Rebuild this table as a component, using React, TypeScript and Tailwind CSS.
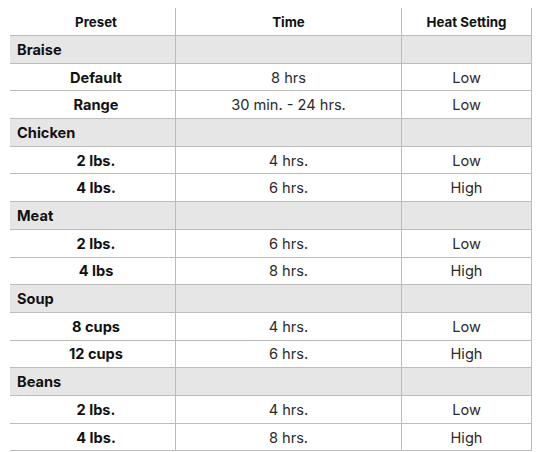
import React from "react";

type Row = { kind: "section"; label: string } | { kind: "item"; label: string; time: string; heat: string };

const rows: Row[] = [
  { kind: "section", label: "Braise" },
  { kind: "item", label: "Default", time: "8 hrs", heat: "Low" },
  { kind: "item", label: "Range", time: "30 min. - 24 hrs.", heat: "Low" },
  { kind: "section", label: "Chicken" },
  { kind: "item", label: "2 lbs.", time: "4 hrs.", heat: "Low" },
  { kind: "item", label: "4 lbs.", time: "6 hrs.", heat: "High" },
  { kind: "section", label: "Meat" },
  { kind: "item", label: "2 lbs.", time: "6 hrs.", heat: "Low" },
  { kind: "item", label: "4 lbs", time: "8 hrs.", heat: "High" },
  { kind: "section", label: "Soup" },
  { kind: "item", label: "8 cups", time: "4 hrs.", heat: "Low" },
  { kind: "item", label: "12 cups", time: "6 hrs.", heat: "High" },
  { kind: "section", label: "Beans" },
  { kind: "item", label: "2 lbs.", time: "4 hrs.", heat: "Low" },
  { kind: "item", label: "4 lbs.", time: "8 hrs.", heat: "High" },
];

export default function App() {
  return (
    <div className="w-[536px] h-[452px] overflow-hidden bg-white pt-[8px] pl-[10px]" style={{ fontFamily: '"Inter", "Noto Sans", sans-serif' }}>
      <div className="grid grid-cols-[166px_226px_130px] text-[#111]">
        <div className="h-[28px] border-r border-b border-[#bcbcbc] pl-[7px] pt-[2px] flex items-center justify-center text-[13.3px] font-bold">Preset</div>
        <div className="h-[28px] border-r border-b border-[#bcbcbc] pt-[2px] flex items-center justify-center text-[13.3px] font-bold">Time</div>
        <div className="h-[28px] border-r border-b border-[#bcbcbc] pt-[2px] flex items-center justify-center text-[13.3px] font-bold">Heat Setting</div>
        {rows.map((r, i) =>
          r.kind === "section" ? (
            <React.Fragment key={i}>
              <div className="h-[27.7px] bg-[#e6e6e6] border-r border-b border-[#bcbcbc] pl-[7px] pt-[3px] flex items-center text-[14.6px] font-bold">{r.label}</div>
              <div className="h-[27.7px] bg-[#e6e6e6] border-r border-b border-[#bcbcbc]"></div>
              <div className="h-[27.7px] bg-[#e6e6e6] border-r border-b border-[#bcbcbc]"></div>
            </React.Fragment>
          ) : (
            <React.Fragment key={i}>
              <div className="h-[27.7px] border-r border-b border-[#bcbcbc] pl-[7px] pt-[3px] flex items-center justify-center text-[14.6px] font-bold">{r.label}</div>
              <div className="h-[27.7px] border-r border-b border-[#bcbcbc] pt-[3px] flex items-center justify-center text-[14.6px] text-[#2a2a2a]">{r.time}</div>
              <div className="h-[27.7px] border-r border-b border-[#bcbcbc] pt-[3px] flex items-center justify-center text-[14.6px] text-[#2a2a2a]">{r.heat}</div>
            </React.Fragment>
          )
        )}
      </div>
    </div>
  );
}
